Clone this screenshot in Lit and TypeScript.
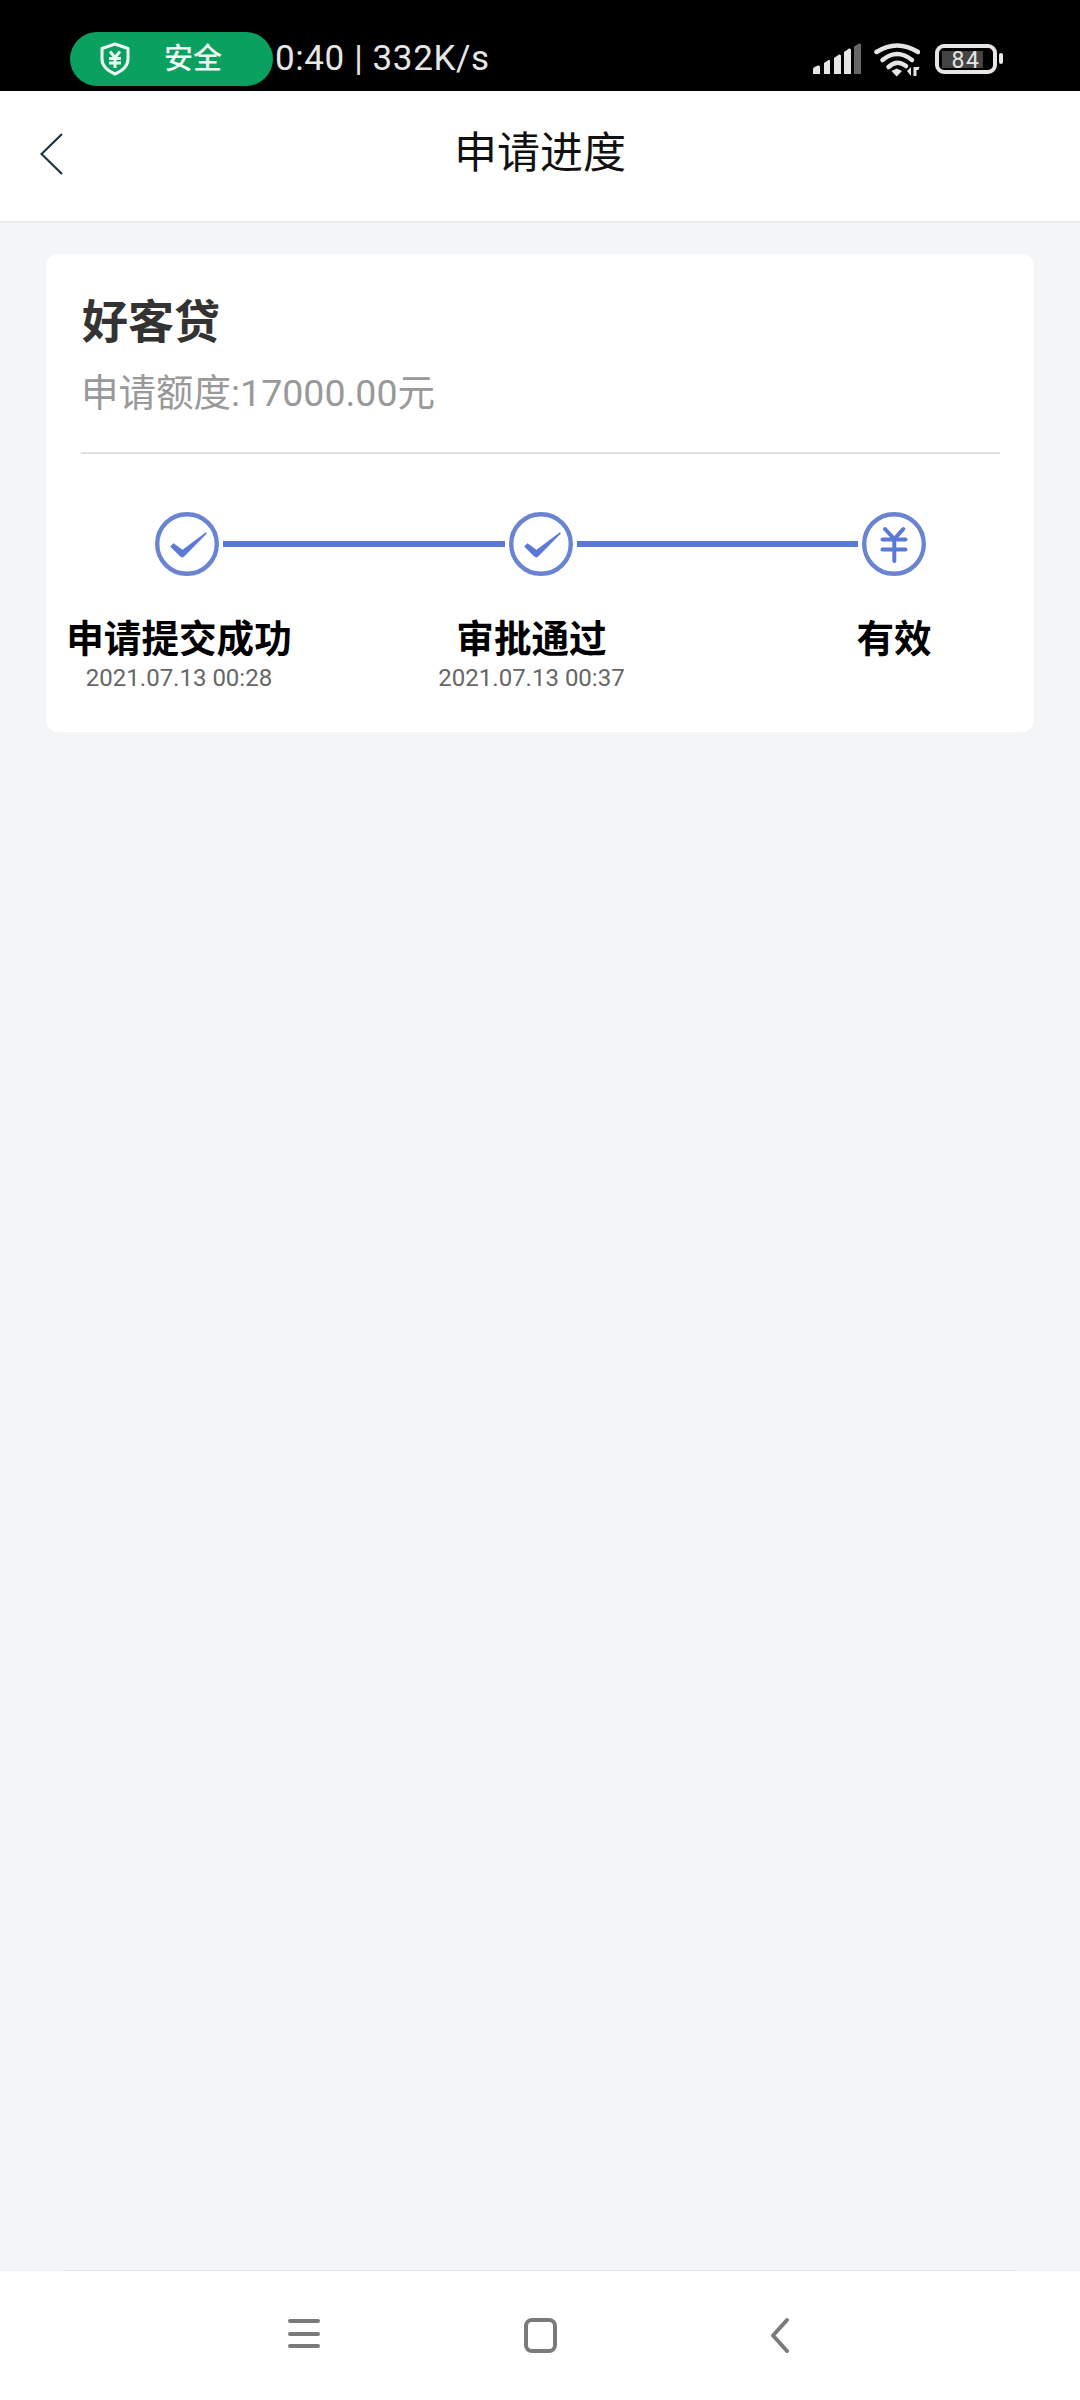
import { LitElement, html, css, svg } from "lit";
import { customElement } from "lit/decorators.js";

const check = svg`<circle cx="32" cy="32" r="29.8" fill="none" stroke="#6b84d2" stroke-width="4.4"/>
  <path d="M15.5 34.5 L18.5 31.5 L27.5 38 L51 20.5 L51.5 21.5 L29 44.5 Q27 46 25 44 Z" fill="#5b78d6" stroke="#5b78d6" stroke-width="0.5" stroke-linejoin="round"/>`;
const yen = svg`<circle cx="32" cy="32" r="29.8" fill="none" stroke="#6b84d2" stroke-width="4.4"/>
  <path d="M23 17 L32.3 27 L41.3 17 M20.5 27.5 H43.5 M20.5 37.5 H43.5 M32.3 27 V49" fill="none" stroke="#5b78d6" stroke-width="4" stroke-linecap="round"/>`;

@customElement("app-root")
export class AppRoot extends LitElement {
  static styles = css`
    :host { display: flex; flex-direction: column; width: 1080px; height: 2400px; background: #f4f5f7;
      font-family: Roboto, "Noto Sans CJK SC", sans-serif; }
    .status { height: 91px; flex: none; background: #000; display: flex; align-items: flex-start; color: #e6e6e6; padding: 32px 77px 0 70px; box-sizing: border-box; }
    .pill { width: 203px; height: 54px; background: #0aa05f; border-radius: 27px; display: flex; align-items: center; padding-left: 30px; box-sizing: border-box; }
    .pill span { margin-left: 34px; font-size: 29px; font-weight: 500; color: #eefaf3; line-height: 1; }
    .time { margin-left: 2px; height: 54px; line-height: 54px; font-size: 35px; letter-spacing: 0.6px; flex: 1; }
    .sys { display: flex; align-items: center; height: 54px; }
    .sys svg { display: block; }
    .wifi { margin-left: 13px; }
    .batt { margin-left: 15px; }
    .head { height: 132px; flex: none; box-sizing: border-box; background: #fff; border-bottom: 2px solid #eceef1; display: grid; grid-template-columns: 1fr auto 1fr; align-items: center; }
    .head h1 { margin: 0 0 6px; font-size: 43px; line-height: 60px; font-weight: 400; color: #111; }
    .back { display: block; margin-left: 40px; margin-bottom: 5px; }
    .main { flex: 1; padding: 31px 46px 0; }
    .card { background: #fff; border-radius: 12px; height: 478px; padding-top: 37px; box-sizing: border-box; }
    .title { margin: 0 0 0 36px; font-size: 46px; line-height: 62px; font-weight: 700; color: #333; }
    .sub { margin: 15px 0 0 35px; font-size: 37.5px; line-height: 50px; color: #999; }
    .rule { height: 2px; background: #e0e0e0; margin: 34px 34px 0 35px; }
    .track { display: flex; align-items: center; padding: 58px 108px 0 109px; }
    .track svg { display: block; flex: none; }
    .line { flex: 1; height: 6px; background: #5b78d6; margin: 0 4px; }
    .steps { display: grid; grid-template-columns: 266px 439px 286px; margin-top: 38px; text-align: center; }
    .name { font-size: 37.6px; line-height: 50px; font-weight: 700; color: #000; white-space: nowrap; }
    .date { font-size: 24px; line-height: 28px; color: #666; white-space: nowrap; }
    .nav { height: 130px; flex: none; box-sizing: border-box; background: #fff; border-top: 1px solid #eff0f3; position: relative; }
    .nav::before { content: ""; position: absolute; left: 65px; right: 65px; top: -1px; height: 1px; background: #dfe1e6; }
    .nav svg { display: block; }
  `;
  render() {
    return html`
      <div class="status">
        <div class="pill">
          <svg width="30" height="34" viewBox="0 0 30 34">
            <path d="M15 2 L28 6.5 V17 C28 24 22 29 15 32 C8 29 2 24 2 17 V6.5 Z" fill="none" stroke="#eefaf3" stroke-width="3" stroke-linejoin="round"/>
            <path d="M10 9.5 L15 15.5 L20 9.5 M9 16.5 H21 M9 21 H21 M15 15.5 V26" fill="none" stroke="#eefaf3" stroke-width="3"/>
          </svg>
          <span>安全</span>
        </div>
        <div class="time">0:40 | 332K/s</div>
        <div class="sys">
          <svg width="48" height="32" viewBox="0 0 48 32">
            <path d="M0 26 Q0 25 1.5 24 L5 22.5 Q7 22 7 24 V31 H0 Z" fill="#e6e6e6"/>
            <path d="M11 20 L15.5 17 Q17 16.5 17 18 V31 H11 Z" fill="#e6e6e6"/>
            <path d="M21 15 L26 11.5 Q28 11 28 13 V31 H21 Z" fill="#e6e6e6"/>
            <path d="M31 9 L36 5.5 Q38 5 38 7 V31 H31 Z" fill="#e6e6e6"/>
            <path d="M41 3.5 L46 0.5 Q48 0 48 2 V31 H41 Z" fill="#666"/>
          </svg>
          <svg class="wifi" width="46" height="36" viewBox="0 0 46 36">
            <g fill="none" stroke="#e6e6e6" stroke-width="4.5" stroke-linecap="round">
              <path d="M2.5 11 Q23 -2 44 11"/>
              <path d="M8.5 19 Q23 7 38 19"/>
              <path d="M14.5 26 Q23 18 32 25"/>
            </g>
            <path d="M17.5 30 L22.7 27.5 L28 30 L22.7 35.5 Z" fill="#e6e6e6"/>
            <path d="M33 30 L37 26 V35 Z M39.5 35 V26 H45.5 L44.5 29 H42.5 V35 Z" fill="#e6e6e6"/>
          </svg>
          <svg class="batt" width="68" height="32" viewBox="0 0 68 32">
            <rect x="2" y="3" width="58" height="26" rx="7" fill="none" stroke="#e6e6e6" stroke-width="4"/>
            <rect x="7" y="8" width="41" height="17" fill="#444"/>
            <rect x="64" y="10" width="4" height="11" rx="2" fill="#e6e6e6"/>
            <text x="31" y="24.5" text-anchor="middle" font-size="23" font-family="Roboto, sans-serif" fill="#e6e6e6" letter-spacing="1.5">84</text>
          </svg>
        </div>
      </div>
      <div class="head">
        <svg class="back" width="24" height="42" viewBox="0 0 24 42"><path d="M22 1 L1.5 21 L22 41" fill="none" stroke="#1c3340" stroke-width="2.2"/></svg>
        <h1>申请进度</h1>
      </div>
      <div class="main">
        <div class="card">
          <h2 class="title">好客贷</h2>
          <div class="sub">申请额度:17000.00元</div>
          <div class="rule"></div>
          <div class="track">
            <svg width="64" height="64" viewBox="0 0 64 64">${check}</svg>
            <div class="line"></div>
            <svg width="64" height="64" viewBox="0 0 64 64">${check}</svg>
            <div class="line"></div>
            <svg width="64" height="64" viewBox="0 0 64 64">${yen}</svg>
          </div>
          <div class="steps">
            <div><div class="name">申请提交成功</div><div class="date">2021.07.13 00:28</div></div>
            <div><div class="name">审批通过</div><div class="date">2021.07.13 00:37</div></div>
            <div><div class="name">有效</div></div>
          </div>
        </div>
      </div>
      <div class="nav">
        <svg width="1080" height="129" viewBox="0 0 1080 129">
          <g fill="none" stroke="#7a7a7a" stroke-width="4" stroke-linecap="round" stroke-linejoin="round">
            <path d="M290 50 H318 M290 63 H318 M290 75 H318"/>
            <rect x="526" y="49" width="29" height="31" rx="6"/>
            <path d="M787 49 L773 64.5 L787 80"/>
          </g>
        </svg>
      </div>
    `;
  }
}
